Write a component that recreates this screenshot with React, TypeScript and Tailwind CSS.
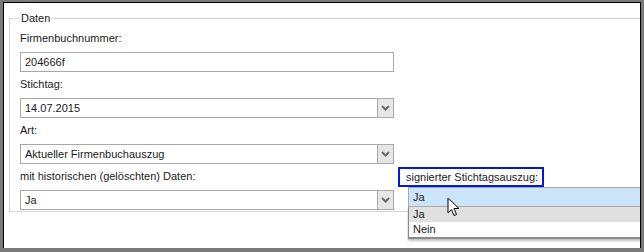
import type { ReactNode } from "react";

function Chevron() {
  return (
    <svg width="9" height="6" viewBox="0 0 9 6" className="block">
      <polyline points="1,1 4.5,4.5 8,1" fill="none" stroke="#6b6b6b" strokeWidth="2" />
    </svg>
  );
}

function Field({ label, children }: { label: string; children: ReactNode }) {
  return (
    <div className="flex flex-col">
      <div className="h-[26px] leading-[25px]">{label}</div>
      {children}
    </div>
  );
}

function TextBox({ value }: { value: string }) {
  return (
    <div className="h-[20px] w-[374px] border border-[#a9a9a9] bg-white pl-[4px] leading-[18px]">{value}</div>
  );
}

function Select({ value }: { value: string }) {
  return (
    <div className="flex h-[20px] w-[374px] border border-[#a9a9a9] bg-white">
      <div className="flex-1 pl-[4px] leading-[18px]">{value}</div>
      <div className="flex w-[16px] items-center justify-center border-l border-[#a9a9a9] bg-[#e6e6e6]">
        <Chevron />
      </div>
    </div>
  );
}

export default function App() {
  return (
    <div
      className="h-[252px] w-[644px] overflow-hidden bg-[#7a7a7a] pl-[3px] pr-[3px] pt-[2px] pb-[4px] text-[11px] text-[#1b1b1b]"
      style={{ fontFamily: '"Liberation Sans", Arial, sans-serif' }}
    >
      <div className="relative h-full overflow-hidden border-l border-t border-r border-black bg-white pl-[5px] pt-[7px]">
        <fieldset className="h-[202px] w-[660px] border border-[#d5d5d5] pl-[10px] pr-0 pt-0">
          <legend className="ml-[-1px] px-[2px] leading-[16px]">Daten</legend>
          <Field label="Firmenbuchnummer:">
            <TextBox value="204666f" />
          </Field>
          <Field label="Stichtag:">
            <Select value="14.07.2015" />
          </Field>
          <Field label="Art:">
            <Select value="Aktueller Firmenbuchauszug" />
          </Field>
          <div className="flex items-start">
            <Field label="mit historischen (gelöschten) Daten:">
              <Select value="Ja" />
            </Field>
            <div className="ml-[4px] flex flex-col pt-[3px]">
              <div className="h-[20px] w-[146px] border-2 border-[#0018e0] pl-[6px] leading-[16px]">
                signierter Stichtagsauszug:
              </div>
              <div className="relative ml-[10px] w-[240px]">
                <div className="h-[20px] border border-[#a9a9a9] bg-[#cce4f7] pl-[4px] leading-[18px]">Ja</div>
                <div className="absolute left-0 top-[20px] w-full border-b-2 border-l border-[#8a8a8a] bg-white shadow-[0_2px_2px_rgba(0,0,0,0.25)]">
                  <div className="h-[15px] bg-[#e0e0e0] pl-[4px] leading-[15px]">Ja</div>
                  <div className="h-[15px] pl-[4px] leading-[15px]">Nein</div>
                </div>
                <svg width="14" height="20" viewBox="0 0 14 20" className="absolute left-[39px] top-[10px]">
                  <path d="M1 1 L1 16 L4.5 12.5 L7 18.5 L9.5 17.5 L7 11.5 L12 11.5 Z" fill="white" stroke="black" strokeWidth="1" strokeLinejoin="round" />
                </svg>
              </div>
            </div>
          </div>
        </fieldset>
      </div>
    </div>
  );
}
